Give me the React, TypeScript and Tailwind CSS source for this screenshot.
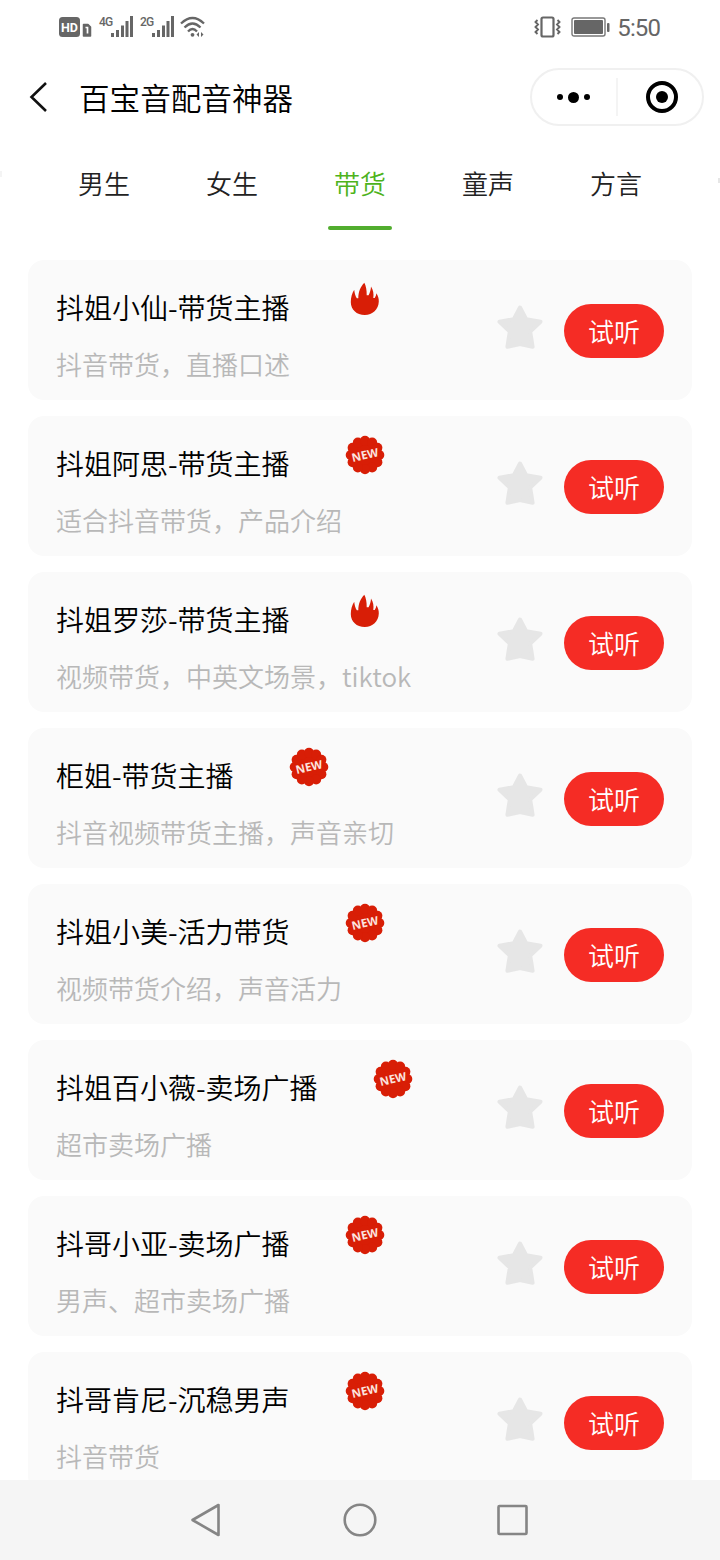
import React from "react";

type Badge = "hot" | "new";
type Voice = { name: string; desc: string; badge: Badge };

const voices: Voice[] = [
  { name: "抖姐小仙-带货主播", desc: "抖音带货，直播口述", badge: "hot" },
  { name: "抖姐阿思-带货主播", desc: "适合抖音带货，产品介绍", badge: "new" },
  { name: "抖姐罗莎-带货主播", desc: "视频带货，中英文场景，tiktok", badge: "hot" },
  { name: "柜姐-带货主播", desc: "抖音视频带货主播，声音亲切", badge: "new" },
  { name: "抖姐小美-活力带货", desc: "视频带货介绍，声音活力", badge: "new" },
  { name: "抖姐百小薇-卖场广播", desc: "超市卖场广播", badge: "new" },
  { name: "抖哥小亚-卖场广播", desc: "男声、超市卖场广播", badge: "new" },
  { name: "抖哥肯尼-沉稳男声", desc: "抖音带货", badge: "new" },
];

const tabs = ["男生", "女生", "带货", "童声", "方言"];

function Signal() {
  return (
    <svg width="23" height="22" viewBox="0 0 23 22" fill="#666">
      <rect x="0" y="17" width="3" height="4" />
      <rect x="5" y="14" width="3" height="7" />
      <rect x="10" y="9.500" width="3" height="11.500" />
      <rect x="14.500" y="5" width="3" height="16" />
      <rect x="19" y="0" width="3" height="21" />
    </svg>
  );
}

function StatusBar() {
  return (
    <div className="flex h-[54px] shrink-0 items-center justify-between pl-[59px] pr-[60px] text-[#666]">
      <div className="flex items-center">
        <svg width="34" height="22" viewBox="0 0 34 22">
          <rect x="0" y="1" width="21" height="20" rx="3.500" fill="#666" />
          <text x="10.500" y="15.500" fontSize="12.500" fontWeight="700" fill="#fff" textAnchor="middle" fontFamily="Roboto, sans-serif">HD</text>
          <path d="M24.500 8.500h4.500l2.500 2.500V20h-7z" fill="#666" stroke="#666" strokeWidth="1.500" strokeLinejoin="round" />
          <path d="M26.500 11.500h2V17.500" fill="none" stroke="#fff" strokeWidth="1.700" />
        </svg>
        <span className="ml-[6px] w-[12px] -translate-y-[5px] font-[Roboto,sans-serif] text-[12px] font-medium leading-none tracking-[-0.8px]">4G</span>
        <Signal />
        <span className="ml-[6px] w-[12px] -translate-y-[5px] font-[Roboto,sans-serif] text-[12px] font-medium leading-none tracking-[-0.8px]">2G</span>
        <Signal />
        <svg className="ml-[5px]" width="26" height="22" viewBox="0 0 26 22" fill="none" stroke="#666" strokeWidth="2.300">
          <path d="M1 7.500Q12.500-3.500 24 7.500M4.500 11.500Q12.500 3.500 20.500 11.500M8 15.500Q12.500 10.500 17 15.500" />
          <circle cx="12.500" cy="18.800" r="1.900" fill="#666" stroke="none" />
          <path d="M19 16l-2.500 2.500L19 21zM21 16l2.500 2.500L21 21z" fill="#666" stroke="none" />
        </svg>
      </div>
      <div className="flex items-center">
        <svg width="27" height="22" viewBox="0 0 27 22" fill="none" stroke="#666" strokeWidth="2.200">
          <rect x="7.500" y="1.500" width="12" height="19" rx="1.500" />
          <path d="M3.500 4L1.500 6l2.500 2.500L1.500 11 4 13.500 1.500 16l2 2M23.500 4l2 2L23 8.500l2.500 2.500-2.500 2.500 2.500 2.500-2 2" strokeWidth="1.900" />
        </svg>
        <svg className="ml-[10px]" width="39" height="20" viewBox="0 0 39 20">
          <rect x="1" y="1" width="33" height="18" rx="2" fill="none" stroke="#777" strokeWidth="1.400" />
          <rect x="3" y="3" width="29" height="14" rx="1" fill="#666" />
          <rect x="36" y="6" width="2.500" height="9" rx="1" fill="#666" />
        </svg>
        <span className="ml-[7px] translate-y-px font-[Roboto,sans-serif] text-[24px] leading-none tracking-[-0.9px]">5:50</span>
      </div>
    </div>
  );
}

function Header() {
  return (
    <header className="flex h-[86px] shrink-0 items-center pl-[29px] pr-[16px]">
      <svg width="19" height="30" viewBox="0 0 19 30" fill="none" stroke="#111" strokeWidth="2.600">
        <path d="M17 1L2.500 15 17 29" />
      </svg>
      <h1 className="ml-[31px] flex-1 text-[30.600px] font-[350] leading-[40px] text-black">百宝音配音神器</h1>
      <div className="flex h-[58px] w-[174px] items-center rounded-full border-2 border-[#f0f0f0]">
        <div className="flex h-[38px] w-[86px] items-center justify-center gap-[5px] border-r-2 border-[#f4f4f4] pr-[2px]">
          <i className="size-[6px] rounded-full bg-black" />
          <i className="size-[11px] rounded-full bg-black" />
          <i className="size-[6px] rounded-full bg-black" />
        </div>
        <div className="flex flex-1 items-center justify-center pl-[4px]">
          <span className="flex size-[32px] items-center justify-center rounded-full border-4 border-black">
            <i className="size-[12px] rounded-full bg-black" />
          </span>
        </div>
      </div>
    </header>
  );
}

function Tabs() {
  return (
    <nav className="flex h-[120px] shrink-0">
      <span className="mr-[38px] mt-[31px] h-[6px] w-[2px] shrink-0 bg-[#f4f4f4]" />
      {tabs.map((t) => (
        <div key={t} className="flex w-[128px] shrink-0 flex-col items-center pt-[24px]">
          <span className={t === "带货" ? "text-[26px] font-[350] leading-[38px] text-[#4eb31c]" : "text-[26px] font-[350] leading-[38px] text-[#222]"}>{t}</span>
          {t === "带货" && <span className="mt-[24px] h-[4px] w-[64px] rounded-full bg-[#51ad2e]" />}
        </div>
      ))}
      <span className="ml-auto mt-[38px] h-[5px] w-[2px] shrink-0 bg-[#e6e6e6]" />
    </nav>
  );
}

function Flame() {
  return (
    <svg width="40" height="40" viewBox="0 0 40 40" fill="#d81e06">
      <path d="M19.300 3.700C21 7 21.800 11 21.700 16.300H23.600C25 13.500 25.900 10.500 26 7.500C28.300 11 28.900 15 28.300 19H29.700C30.700 17.600 31.200 16 31.400 14.300C33 16.700 33.900 19.600 33.800 22.500C33.500 30.600 27.600 36 19.800 36C11.600 36 5.800 30.600 5.800 23C5.800 18.500 7 14.200 9.200 10.800C9.600 14.300 10.400 17 11.800 19.300H13.300C13.300 12.800 15.500 7.500 19.300 3.700Z" />
    </svg>
  );
}

function NewSeal() {
  return (
    <svg width="40" height="40" viewBox="0 0 40 40">
      <g fill="#d81e06">
        <circle cx="20" cy="20" r="16.500" />
        {Array.from({ length: 12 }, (_, i) => {
          const a = (i * Math.PI) / 6;
          return <circle key={i} cx={20 + 14.3 * Math.cos(a)} cy={20 + 14.3 * Math.sin(a)} r="5" />;
        })}
      </g>
      <text x="20" y="24" fontSize="11.500" fontWeight="700" fill="#fbe3df" textAnchor="middle" fontFamily="Open Sans, sans-serif" transform="rotate(-13 20 20)">NEW</text>
    </svg>
  );
}

function Card({ voice }: { voice: Voice }) {
  return (
    <article className="flex h-[140px] shrink-0 items-center rounded-[16px] bg-[#fafafa] pl-[28px] pr-[28px]">
      <div className="flex h-full flex-1 flex-col">
        <div className="flex h-[75px] items-start">
          <h2 className="mt-[27px] whitespace-nowrap text-[28px] font-[350] leading-[40px] text-black">{voice.name}</h2>
          <span className="ml-[55px] mt-[19px]">{voice.badge === "hot" ? <Flame /> : <NewSeal />}</span>
        </div>
        <p className="mt-[10px] whitespace-nowrap text-[26px] font-[350] leading-[38px] text-[#b8b8b8]">{voice.desc}</p>
      </div>
      <svg className="-mt-[4px] mr-[20px]" width="48" height="48" viewBox="0 0 48 48" fill="#e6e6e6" stroke="#e6e6e6" strokeWidth="4" strokeLinejoin="round">
        <path d="M24 3.500l6.200 11.700 14.300 2.500-10.300 9.900 2.400 15.200L24 40l-12.600 2.800 2.400-15.200L3.500 17.700l14.300-2.500Z" />
      </svg>
      <button className="mt-[2px] h-[54px] w-[100px] rounded-full bg-[#f52c25] text-[26px] font-[350] leading-[54px] text-white">试听</button>
    </article>
  );
}

function NavBar() {
  return (
    <footer className="flex h-[80px] shrink-0 items-center justify-between bg-[#f5f5f5] pl-[190px] pr-[191px]">
      <svg width="32" height="36" viewBox="0 0 32 36" fill="none" stroke="#858585" strokeWidth="2.600" strokeLinejoin="round">
        <path d="M2.500 18L28.500 3v30Z" />
      </svg>
      <svg width="36" height="36" viewBox="0 0 36 36" fill="none" stroke="#858585" strokeWidth="2.600">
        <circle cx="19" cy="18" r="15.300" />
      </svg>
      <svg width="33" height="36" viewBox="0 0 33 36" fill="none" stroke="#858585" strokeWidth="2.600" strokeLinejoin="round">
        <rect x="2.500" y="4" width="28" height="28" rx="1" />
      </svg>
    </footer>
  );
}

export default function App() {
  return (
    <div className="flex h-[1560px] w-[720px] flex-col overflow-hidden bg-white font-['Noto_Sans_CJK_SC',sans-serif]">
      <StatusBar />
      <Header />
      <Tabs />
      <main className="flex min-h-0 flex-1 flex-col gap-[16px] overflow-hidden px-[28px]">
        {voices.map((v) => (
          <Card key={v.name} voice={v} />
        ))}
      </main>
      <NavBar />
    </div>
  );
}
